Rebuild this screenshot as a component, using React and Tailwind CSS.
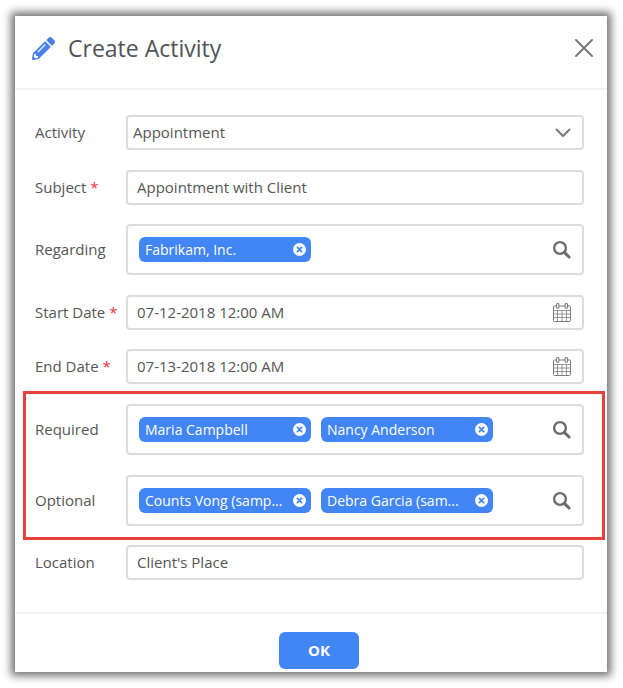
import { FaPencilAlt } from 'react-icons/fa'

const font = { fontFamily: '"Open Sans", sans-serif' }

function Label({ text, required }) {
  return (
    <div className="w-[91px] shrink-0 text-[15px] text-[#555]">
      {text}
      {required && <span className="text-[#e8303a]"> *</span>}
    </div>
  )
}

function SearchIcon() {
  return (
    <svg width="19" height="19" viewBox="0 0 19 19" fill="none" stroke="#6b6b6b" strokeLinecap="round" className="shrink-0">
      <circle cx="8" cy="8" r="5.9" strokeWidth="2.4" />
      <path d="M12.6 12.6 L17 17" strokeWidth="3" />
    </svg>
  )
}

function CalendarIcon() {
  return (
    <svg width="18" height="19" viewBox="0 0 18 19" fill="none" stroke="#7b7b7b" strokeWidth="1" className="shrink-0">
      <rect x="0.5" y="3" width="17" height="15.5" rx="1" />
      <path d="M0.5 7.5 H17.5 M0.5 11 H17.5 M0.5 14.5 H17.5 M4.5 7.5 V18.5 M9 7.5 V18.5 M13.5 7.5 V18.5" strokeWidth="0.8" />
      <rect x="3.5" y="0.5" width="2.4" height="5" rx="1.2" fill="#fff" strokeWidth="1.1" />
      <rect x="12.1" y="0.5" width="2.4" height="5" rx="1.2" fill="#fff" strokeWidth="1.1" />
    </svg>
  )
}

function Chip({ text }) {
  return (
    <div className="w-[172px] h-[25px] shrink-0 rounded-[6px] bg-[#4285f4] flex items-center pl-[6px] pr-[5px] text-white text-[14px]">
      <span className="flex-1 whitespace-nowrap overflow-hidden">{text}</span>
      <svg width="13" height="13" viewBox="0 0 13 13" className="shrink-0">
        <circle cx="6.5" cy="6.5" r="6.5" fill="#fff" />
        <path d="M4.4 4.4 L8.6 8.6 M8.6 4.4 L4.4 8.6" stroke="#4285f4" strokeWidth="1.8" strokeLinecap="round" />
      </svg>
    </div>
  )
}

function Box({ children, pl = 'pl-[9px]' }) {
  return (
    <div className={`h-[35px] flex-1 min-w-0 rounded-[4px] border-2 border-[#dcdcdc] bg-white flex items-center ${pl} pr-[11px] text-[15px] text-[#555]`}>
      {children}
    </div>
  )
}

function ChipRow({ label, chips }) {
  return (
    <div className="flex items-center">
      <Label text={label} />
      <div className="h-[51px] flex-1 min-w-0 rounded-[4px] border-2 border-[#dcdcdc] bg-white flex items-center px-[11px] gap-[10px]">
        {chips.map((c) => (
          <Chip key={c} text={c} />
        ))}
        <span className="ml-auto">
          <SearchIcon />
        </span>
      </div>
    </div>
  )
}

function DateRow({ label, value }) {
  return (
    <div className="flex items-center">
      <Label text={label} required />
      <Box>
        <span className="flex-1">{value}</span>
        <CalendarIcon />
      </Box>
    </div>
  )
}

export default function App() {
  return (
    <div className="w-[623px] h-[688px] bg-white pt-[16px] pl-[15px]" style={font}>
      <div className="w-[592px] h-[656px] bg-white flex flex-col shadow-[0_0_8px_4px_rgba(0,0,0,0.55)]">
        <div className="h-[74px] shrink-0 border-b-2 border-[#f1f1f1] flex items-center pl-[17px] pr-[14px] pb-[8px]">
          <FaPencilAlt className="text-[#4a80ee] text-[23px] shrink-0" />
          <div className="ml-[13px] text-[23px] text-[#4f5358]">Create Activity</div>
          <svg width="18" height="18" viewBox="0 0 18 18" stroke="#777" strokeWidth="2" strokeLinecap="round" className="ml-auto">
            <path d="M1 1 L17 17 M17 1 L1 17" />
          </svg>
        </div>

        <div className="flex-1 pt-[25px] pl-[20px] pr-[23px] flex flex-col gap-[19.5px]">
          <div className="flex items-center">
            <Label text="Activity" />
            <Box pl="pl-[5px]">
              <span className="flex-1">Appointment</span>
              <svg width="16" height="10" viewBox="0 0 16 10" fill="none" stroke="#777" strokeWidth="2" strokeLinecap="round" strokeLinejoin="round">
                <path d="M1.5 1.5 L8 8 L14.5 1.5" />
              </svg>
            </Box>
          </div>
          <div className="flex items-center">
            <Label text="Subject" required />
            <Box>Appointment with Client</Box>
          </div>
          <ChipRow label="Regarding" chips={['Fabrikam, Inc.']} />
          <DateRow label="Start Date" value="07-12-2018 12:00 AM" />
          <DateRow label="End Date" value="07-13-2018 12:00 AM" />

          <div className="relative flex flex-col gap-[20px]">
            <ChipRow label="Required" chips={['Maria Campbell', 'Nancy Anderson']} />
            <ChipRow label="Optional" chips={['Counts Vong (samp...', 'Debra Garcia (sam...']} />
            <div className="absolute top-[-13px] bottom-[-14px] left-[-12px] right-[-21px] border-[3px] border-[#e8413c] pointer-events-none" />
          </div>

          <div className="flex items-center">
            <Label text="Location" />
            <Box>Client's Place</Box>
          </div>
        </div>

        <div className="h-[60px] shrink-0 border-t-2 border-[#f1f1f1] flex justify-center pt-[18px] pl-[16px]">
          <button className="w-[80px] h-[37px] rounded-[6px] bg-[#4285f4] text-white text-[15px] font-bold">OK</button>
        </div>
      </div>
    </div>
  )
}
